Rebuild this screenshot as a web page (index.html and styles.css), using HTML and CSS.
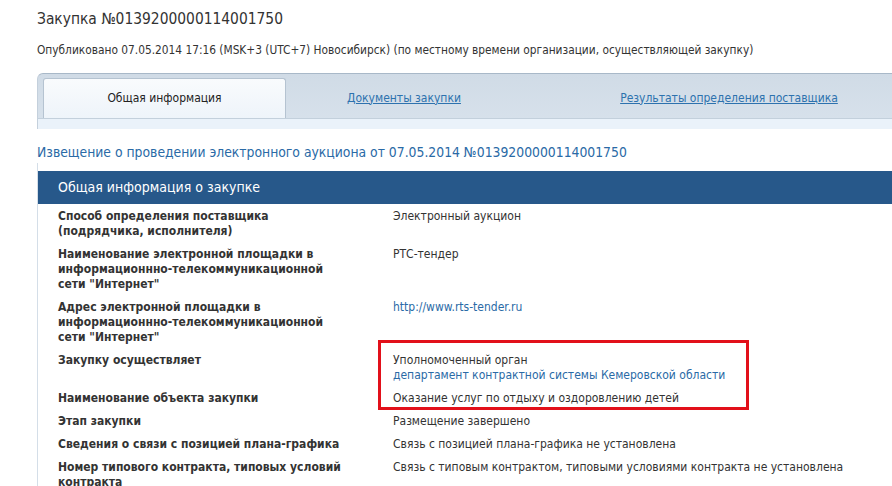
FILE: index.html
```html
<!DOCTYPE html>
<html lang="ru">
<head>
<meta charset="utf-8">
<title>Закупка №0139200000114001750</title>
<link rel="stylesheet" href="styles.css">
</head>
<body>
<div class="page">
  <h1 class="title">Закупка №0139200000114001750</h1>
  <p class="published">Опубликовано 07.05.2014 17:16 (MSK+3 (UTC+7) Новосибирск) (по местному времени организации, осуществляющей закупку)</p>
  <div class="tabbar">
    <div class="tabs">
      <div class="tab tab-active">Общая информация</div>
      <div class="tab tab-docs"><a href="#">Документы закупки</a></div>
      <div class="tab tab-results"><a href="#">Результаты определения поставщика</a></div>
    </div>
    <div class="tabstrip"></div>
  </div>
  <h2 class="notice">Извещение о проведении электронного аукциона от 07.05.2014 №0139200000114001750</h2>
  <div class="section">
    <div class="section-head">Общая информация о закупке</div>
    <div class="rows">
      <div class="row">
        <div class="label">Способ определения поставщика<br>(подрядчика, исполнителя)</div>
        <div class="value">Электронный аукцион</div>
      </div>
      <div class="row">
        <div class="label">Наименование электронной площадки в<br>информационнно-телекоммуникационной<br>сети "Интернет"</div>
        <div class="value">РТС-тендер</div>
      </div>
      <div class="row">
        <div class="label">Адрес электронной площадки в<br>информационнно-телекоммуникационной<br>сети "Интернет"</div>
        <div class="value"><a href="#" class="plain">http://www.rts-tender.ru</a></div>
      </div>
      <div class="row">
        <div class="label">Закупку осуществляет</div>
        <div class="value">Уполномоченный орган<br><a href="#" class="plain">департамент контрактной системы Кемеровской области</a></div>
      </div>
      <div class="row">
        <div class="label">Наименование объекта закупки</div>
        <div class="value">Оказание услуг по отдыху и оздоровлению детей</div>
      </div>
      <div class="row">
        <div class="label">Этап закупки</div>
        <div class="value">Размещение завершено</div>
      </div>
      <div class="row">
        <div class="label">Сведения о связи с позицией плана-графика</div>
        <div class="value">Связь с позицией плана-графика не установлена</div>
      </div>
      <div class="row">
        <div class="label">Номер типового контракта, типовых условий<br>контракта</div>
        <div class="value">Связь с типовым контрактом, типовыми условиями контракта не установлена</div>
      </div>
    </div>
    <div class="highlight"></div>
  </div>
</div>
</body>
</html>
```

FILE: styles.css
```css
html, body {
  margin: 0;
  padding: 0;
  background: #fff;
  overflow: hidden;
}
body {
  font-family: "DejaVu Sans Condensed", "DejaVu Sans", sans-serif;
  color: #333;
  font-size: 12px;
  line-height: 15px;
}
.page {
  padding-left: 37px;
  width: 900px;
}
.title {
  margin: 0;
  padding-top: 8px;
  font-size: 15.4px;
  line-height: 22px;
  font-weight: normal;
  color: #333;
}
.published {
  margin: 0;
  padding-top: 13px;
  font-size: 11.8px;
  line-height: 15px;
}
.tabbar {
  margin-top: 15px;
  border-top-left-radius: 6px;
  background: linear-gradient(#d0dbe6, #d8e2ec);
  border-top: 1px solid #a8b8c8;
  border-left: 1px solid #c4d0dc;
  padding-top: 4px;
}
.tabs {
  display: flex;
  height: 40px;
  padding-left: 5px;
}
.tab {
  display: flex;
  align-items: center;
  justify-content: center;
  font-size: 12px;
}
.tab a {
  color: #2d72ae;
  text-decoration: underline;
}
.tab-active {
  width: 241px;
  background: linear-gradient(#f9fbfd, #eef4fa);
  border: 1px solid #b5c3d1;
  border-bottom: none;
  border-top-left-radius: 3px;
  border-top-right-radius: 3px;
  color: #222;
}
.tab-docs {
  width: 236px;
}
.tab-results {
  width: 414px;
}
.tabstrip {
  height: 10px;
  background: #eaf2fa;
  border-top: 1px solid #c3d0dc;
}
.notice {
  margin: 14px 0 0 0;
  font-size: 13.8px;
  line-height: 18px;
  font-weight: normal;
  color: #2a6aa6;
}
.section {
  position: relative;
  border-left: 1px solid #d4dee8;
  margin-top: 2px;
  padding-top: 8px;
}
.section-head {
  background: #27588a;
  color: #fff;
  font-size: 14px;
  height: 33px;
  line-height: 33px;
  padding-left: 20px;
}
.rows {
  display: flex;
  flex-direction: column;
  gap: 8px;
  padding-top: 5px;
}
.row {
  display: flex;
}
.label {
  width: 335px;
  padding-left: 20px;
  font-weight: bold;
  color: #333;
}
.value {
  color: #333;
}
a.plain {
  color: #2a6aa6;
  text-decoration: none;
}
.highlight {
  position: absolute;
  left: 340px;
  top: 177px;
  width: 365px;
  height: 64px;
  border: 3px solid #e2101a;
}
```
